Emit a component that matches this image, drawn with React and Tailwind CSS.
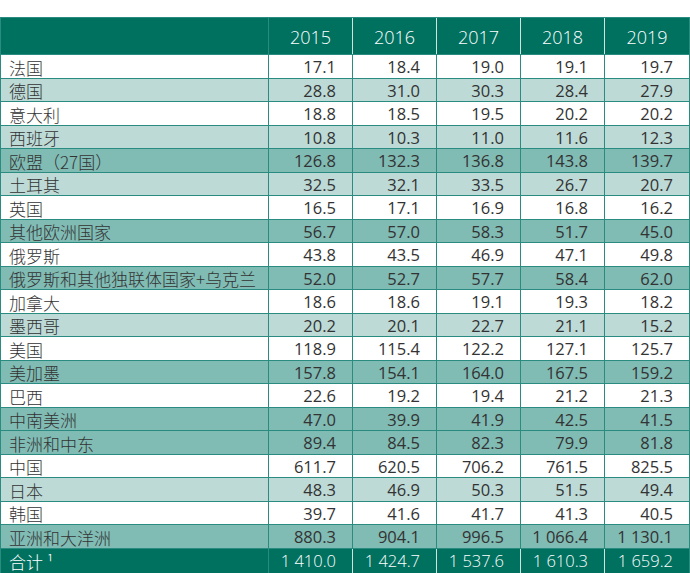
const years = ["2015", "2016", "2017", "2018", "2019"];

const rows = [
  ["法国", ["17.1", "18.4", "19.0", "19.1", "19.7"], "white"],
  ["德国", ["28.8", "31.0", "30.3", "28.4", "27.9"], "light"],
  ["意大利", ["18.8", "18.5", "19.5", "20.2", "20.2"], "white"],
  ["西班牙", ["10.8", "10.3", "11.0", "11.6", "12.3"], "light"],
  ["欧盟（27国）", ["126.8", "132.3", "136.8", "143.8", "139.7"], "mid"],
  ["土耳其", ["32.5", "32.1", "33.5", "26.7", "20.7"], "light"],
  ["英国", ["16.5", "17.1", "16.9", "16.8", "16.2"], "white"],
  ["其他欧洲国家", ["56.7", "57.0", "58.3", "51.7", "45.0"], "mid"],
  ["俄罗斯", ["43.8", "43.5", "46.9", "47.1", "49.8"], "white"],
  ["俄罗斯和其他独联体国家+乌克兰", ["52.0", "52.7", "57.7", "58.4", "62.0"], "mid"],
  ["加拿大", ["18.6", "18.6", "19.1", "19.3", "18.2"], "white"],
  ["墨西哥", ["20.2", "20.1", "22.7", "21.1", "15.2"], "light"],
  ["美国", ["118.9", "115.4", "122.2", "127.1", "125.7"], "white"],
  ["美加墨", ["157.8", "154.1", "164.0", "167.5", "159.2"], "mid"],
  ["巴西", ["22.6", "19.2", "19.4", "21.2", "21.3"], "white"],
  ["中南美洲", ["47.0", "39.9", "41.9", "42.5", "41.5"], "mid"],
  ["非洲和中东", ["89.4", "84.5", "82.3", "79.9", "81.8"], "mid"],
  ["中国", ["611.7", "620.5", "706.2", "761.5", "825.5"], "white"],
  ["日本", ["48.3", "46.9", "50.3", "51.5", "49.4"], "light"],
  ["韩国", ["39.7", "41.6", "41.7", "41.3", "40.5"], "white"],
  ["亚洲和大洋洲", ["880.3", "904.1", "996.5", "1 066.4", "1 130.1"], "mid"],
];

const totals = ["1 410.0", "1 424.7", "1 537.6", "1 610.3", "1 659.2"];

const rowBg = {
  white: "bg-white",
  light: "bg-[#bddad7]",
  mid: "bg-[#80bbb4]",
};

export default function App() {
  return (
    <div className="bg-white w-[690px] h-[573px] pt-[17px] overflow-hidden">
      <table className="table-fixed border-collapse w-[689px] text-[#333333] font-['Open_Sans','Noto_Sans_CJK_SC',sans-serif]">
        <colgroup>
          <col className="w-[268px]" />
          <col className="w-[84px]" />
          <col className="w-[84px]" />
          <col className="w-[84px]" />
          <col className="w-[84px]" />
          <col className="w-[85px]" />
        </colgroup>
        <thead>
          <tr className="h-[37px] bg-[#00715f]">
            <th className="border border-[#2a8b80]"></th>
            {years.map((y) => (
              <th
                key={y}
                className="border-l border-l-[#cfe3df] border-y border-y-[#2a8b80] last:border-r last:border-r-[#2a8b80] text-white font-light text-[18px] text-center pt-[2px]"
              >
                {y}
              </th>
            ))}
          </tr>
        </thead>
        <tbody>
          {rows.map(([label, vals, kind]) => (
            <tr key={label} className={`h-[23.5px] ${rowBg[kind]}`}>
              <td className="border border-[#2a8b80] pl-[8px] pt-[2px] text-[17px] leading-none font-['Noto_Sans_CJK_SC',sans-serif] font-light">
                {label}
              </td>
              {vals.map((v, i) => (
                <td
                  key={i}
                  className="border border-[#2a8b80] text-right pr-[16px] pt-[2px] text-[16.5px] leading-none"
                >
                  {v}
                </td>
              ))}
            </tr>
          ))}
          <tr className="h-[25px] bg-[#00715f] text-white">
            <td className="border border-[#2a8b80] pl-[8px] pt-[2px] text-[17px] leading-none font-['Noto_Sans_CJK_SC',sans-serif] font-light">
              合计 ¹
            </td>
            {totals.map((v, i) => (
              <td
                key={i}
                className="border-l border-l-[#cfe3df] border-y border-y-[#2a8b80] last:border-r last:border-r-[#2a8b80] text-right pr-[16px] pt-[2px] text-[16.5px] leading-none font-light"
              >
                {v}
              </td>
            ))}
          </tr>
        </tbody>
      </table>
    </div>
  );
}
